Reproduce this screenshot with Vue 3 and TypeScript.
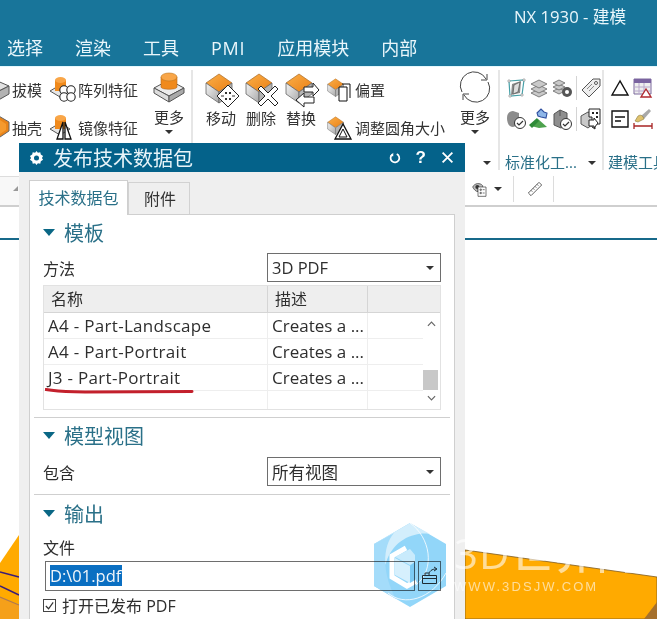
<script setup lang="ts">
const menus = ['选择', '渲染', '工具', 'PMI', '应用模块', '内部']
const templates = [
  { name: 'A4 - Part-Landscape', desc: 'Creates a ...' },
  { name: 'A4 - Part-Portrait', desc: 'Creates a ...' },
  { name: 'J3 - Part-Portrait', desc: 'Creates a ...' },
  { name: '', desc: '' }
]
</script>

<template>
  <div class="app">
    <svg class="defs" width="0" height="0">
      <defs>
        <linearGradient id="orange" x1="0" y1="0" x2="1" y2="1">
          <stop offset="0" stop-color="#fbb04a" />
          <stop offset="1" stop-color="#ea7f14" />
        </linearGradient>
        <linearGradient id="side" x1="0" y1="0" x2="1" y2="1">
          <stop offset="0" stop-color="#f4f4f4" />
          <stop offset="1" stop-color="#a8a8a8" />
        </linearGradient>
        <symbol id="cube" viewBox="0 0 36 36">
          <path d="M1 12 14 3l13 9-13 9z" fill="url(#orange)" stroke="#a96a25" stroke-width=".7" />
          <path d="M1 12v11l13 9V21z" fill="url(#side)" stroke="#666" stroke-width=".8" />
          <path d="M27 12v11l-13 9V21z" fill="#b5b5b5" stroke="#666" stroke-width=".8" />
        </symbol>
        <symbol id="plate" viewBox="0 0 32 32">
          <path d="M1 17 16 9l15 8-15 8z" fill="#ececec" stroke="#555" />
          <path d="M1 17v5l15 9v-6z" fill="#ddd" stroke="#555" />
          <path d="M31 17v5l-15 9v-6z" fill="#aaa" stroke="#555" />
          <path d="M8 6v10c0 3 16 3 16 0V6z" fill="#f08a1c" stroke="#b56a1c" stroke-width=".6" />
          <ellipse cx="16" cy="6" rx="8" ry="4" fill="#f9a648" stroke="#c0771f" stroke-width=".6" />
        </symbol>
      </defs>
    </svg>

    <header class="topbar">
      <div class="app-title">NX 1930 - 建模</div>
      <nav class="menu">
        <span v-for="m in menus" :key="m">{{ m }}</span>
      </nav>
    </header>

    <section class="ribbon">
      <div class="group group-a">
        <div class="group-body">
          <div class="stack">
            <div class="feature">
              <svg class="ic w21" viewBox="0 0 21 26"><path d="M-8 10 6 4l14 6-14 7z" fill="#e2e2e2" stroke="#555" /><path d="M20 10v8L6 26v-9z" fill="#b3b3b3" stroke="#555" /></svg>
              <span>拔模</span>
            </div>
            <div class="feature">
              <svg class="ic w21" viewBox="0 0 21 26"><path d="M-6 6 8 1l12 7v9L8 25-6 20z" fill="#e98419" stroke="#666" /><path d="M-3 8 8 4l9 6v6L8 22-3 17z" fill="#f59a2e" /></svg>
              <span>抽壳</span>
            </div>
          </div>
          <div class="stack">
            <div class="feature">
              <svg class="ic" viewBox="0 0 26 26">
                <path d="M0 15 10 9l10 6-10 6z" fill="#e6e6e6" stroke="#555" />
                <path d="M5 4v11h11V4z" fill="#f08a1c" />
                <ellipse cx="10.500" cy="4" rx="5.500" ry="3" fill="#f9a648" />
                <g fill="#fff" stroke="#222" stroke-width="1.100">
                  <circle cx="14" cy="14" r="4.200" /><circle cx="21" cy="14" r="4.200" /><circle cx="14" cy="21" r="4.200" /><circle cx="21" cy="21" r="4.200" />
                </g>
              </svg>
              <span>阵列特征</span>
            </div>
            <div class="feature">
              <svg class="ic" viewBox="0 0 26 26">
                <path d="M0 15 10 9l10 6-10 6z" fill="#e6e6e6" stroke="#555" />
                <path d="M5 4v11h11V4z" fill="#f08a1c" />
                <ellipse cx="10.500" cy="4" rx="5.500" ry="3" fill="#f9a648" />
                <path d="M13 8 7 25h6zM15 8l6 17h-6z" fill="#fff" stroke="#111" stroke-width="1.300" />
              </svg>
              <span>镜像特征</span>
            </div>
          </div>
          <div class="big more">
            <svg class="big-ic" viewBox="0 0 32 32"><use href="#plate" /></svg>
            <span>更多</span>
            <i class="caret"></i>
          </div>
        </div>
      </div>

      <div class="group group-b">
        <div class="group-body">
          <div class="big">
            <svg class="big-ic" viewBox="0 0 37 37">
              <use href="#cube" x="2" width="36" height="36" />
              <path d="M25 14 36 25 25 36 14 25z" fill="#fff" stroke="#222" />
              <path d="M22 21h2v2h-2zM26 21h2v2h-2zM22 27h2v2h-2zM26 27h2v2h-2zM18 24.500h3v1h-3zM29 24.500h3v1h-3z" fill="#333" />
            </svg>
            <span>移动</span>
          </div>
          <div class="big">
            <svg class="big-ic" viewBox="0 0 37 37">
              <use href="#cube" x="2" width="36" height="36" />
              <path d="m15 18 3-3 7 7 7-7 3 3-7 7 7 7-3 3-7-7-7 7-3-3 7-7z" fill="#fff" stroke="#222" />
            </svg>
            <span>删除</span>
          </div>
          <div class="big">
            <svg class="big-ic" viewBox="0 0 37 37">
              <use href="#cube" x="2" width="36" height="36" />
              <path d="M21 16h9v-4l6 7-6 6v-4h-9zM21 36l-8-7 8-7v4h10v6H21z" fill="#fff" stroke="#222" />
            </svg>
            <span>替换</span>
          </div>
          <div class="stack stack-b">
            <div class="feature">
              <svg class="ic" viewBox="0 0 26 26">
                <use href="#cube" width="22" height="22" y="1" />
                <path d="M12 11h8v14h-8z" fill="#fff" stroke="#111" />
                <path d="M15 8h8v14" fill="none" stroke="#111" />
              </svg>
              <span>偏置</span>
            </div>
            <div class="feature">
              <svg class="ic" viewBox="0 0 26 26">
                <use href="#cube" width="22" height="22" y="1" />
                <path d="M16 10 8 25h16z" fill="#fff" stroke="#111" stroke-width="1.300" />
                <path d="M16 15 12 23h8z" fill="none" stroke="#111" />
              </svg>
              <span>调整圆角大小</span>
            </div>
          </div>
          <div class="big more more-b">
            <svg class="big-ic" viewBox="0 0 32 32" fill="none" stroke="#444" stroke-width="1">
              <path d="M3 21A13 13 0 0 1 27 8" /><path d="M28 3v6h-6" />
              <path d="M29 11A13 13 0 0 1 5 24" /><path d="M4 29v-6h6" />
            </svg>
            <span>更多</span>
            <i class="caret"></i>
          </div>
        </div>
        <div class="group-foot foot-b"><i class="caret"></i></div>
      </div>

      <div class="group group-c">
        <div class="group-body">
          <div class="tool-grid">
            <svg viewBox="0 0 22 22"><path d="M7 7 16 4 15 16 6 18z" fill="#8a8a8a" /><path d="M4 4 19 3 17 18 5 19z" fill="none" stroke="#46a0a8" stroke-width="1.200" /><path d="M9 8 15 5 13 15 8 17z" fill="#ddd" stroke="#555" stroke-width=".7" /><path d="M3 3h2v2H3zM18 2h2v2h-2zM4 18h2v2H4zM16 17h2v2h-2z" fill="#fff" stroke="#888" stroke-width=".6" /></svg>
            <svg viewBox="0 0 22 22" fill="#c9c9c9" stroke="#666" stroke-width=".8"><path d="M11 12 3 16l8 4 8-4z" /><path d="M11 8 3 12l8 4 8-4z" /><path d="M11 3 3 7l8 4 8-4z" /></svg>
            <svg viewBox="0 0 22 22"><g fill="#c9c9c9" stroke="#666" stroke-width=".8"><path d="M8 11 2 14l6 3 6-3z" /><path d="M8 7 2 10l6 3 6-3z" /><path d="M8 3 2 6l6 3 6-3z" /></g><circle cx="16" cy="15" r="5" fill="#555" /><circle cx="16" cy="15" r="2" fill="#fff" /></svg>
            <b class="tool-div"></b>
            <svg viewBox="0 0 22 22"><path d="M13 2h7v7L9 20l-7-7z" fill="#eee" stroke="#555" /><circle cx="16" cy="6" r="1.500" fill="#fff" stroke="#555" /><path d="M7 12l5-5M9 14l5-5" stroke="#888" /></svg>
            <svg viewBox="0 0 22 22"><path d="M2 10c0-5 3-7 6-7l6 2v12l-6 2c-4 0-6-4-6-9z" fill="#8c8c8c" /><circle cx="15" cy="15" r="5.500" fill="#fff" stroke="#333" /><path d="m12 15 2 2 4-4" fill="none" stroke="#333" stroke-width="1.200" /></svg>
            <svg viewBox="0 0 22 22"><path d="M3 18 10 11l9 8-8 1z" fill="#4da24d" /><path d="M1 17 9 10l2 3-7 7z" fill="#2e8a38" /><path d="M9 5 13 1l3 3 3 1-1 5-5-1-3-1z" fill="#8eb6e8" stroke="#3050a0" stroke-width="1.100" /></svg>
            <svg viewBox="0 0 22 22"><path d="M3 6 9 2l7 3v12l-6 3-7-3z" fill="#8f8f8f" stroke="#555" /><path d="M9 8V2" stroke="#555" /><circle cx="15" cy="16" r="5.500" fill="#fff" stroke="#333" /><path d="m12 16 2 2 4-4" fill="none" stroke="#333" stroke-width="1.200" /></svg>
            <b class="tool-div"></b>
            <svg viewBox="0 0 22 22"><path d="M1 8 8 4l5 2v10l-5 4-7-4z" fill="#c9c9c9" stroke="#555" /><path d="M9 1h11v15h-5v5l-3-2V9H9z" fill="#fff" stroke="#222" /><path d="M12 4h2v2h-2zM16 4h2v2h-2zM16 8h2v2h-2z" fill="#222" /><path d="M9 12h5v-2l4 5-4 5v-2H9z" fill="#fff" stroke="#222" /></svg>
          </div>
        </div>
        <div class="group-foot foot-c"><span>标准化工...</span><i class="caret"></i></div>
      </div>

      <div class="group group-d">
        <div class="group-body">
          <div class="tool-grid tool-grid-d">
            <svg viewBox="0 0 22 22"><path d="M11 4 3 18h16z" fill="none" stroke="#111" stroke-width="1.400" /></svg>
            <svg viewBox="0 0 22 22"><path d="M2 2h17v15H2z" fill="#eee" stroke="#7d6a9d" /><path d="M2 2h17v4H2z" fill="#7a63a0" /><path d="M2 10h17M2 14h17M7 6v11M12 6v11" stroke="#b8a8cc" /><path d="M14 12 9 20h10z" fill="#fff" stroke="#b02a30" stroke-width="1.400" /></svg>
            <svg viewBox="0 0 22 22"><path d="M3 3h16v16H3z" fill="#fff" stroke="#111" stroke-width="1.400" /><path d="M6 9h10M6 13h6" stroke="#111" stroke-width="1.300" /></svg>
            <svg viewBox="0 0 22 22"><path d="M17 1 9 8l3 3 7-8z" fill="#a9a9a9" /><path d="M6 8c3-2 5 0 6 3l-6 3-3-1z" fill="#dfc26e" stroke="#8b7a3a" stroke-width=".6" /><path d="M2 15v6M20 15v6M2 18h18" stroke="#a82424" stroke-width="1.300" /></svg>
          </div>
          <b class="tail-div"></b>
        </div>
        <div class="group-foot foot-d"><span>建模工具</span></div>
      </div>
    </section>

    <div class="viewbar">
      <div class="view-left"><i class="mini-arrow"></i></div>
      <div class="view-right">
        <svg class="view-ic" viewBox="0 0 24 24">
          <path d="M1 9c3-6 11-7 15-2v5H9v4C6 16 3 13 1 9z" fill="#bbb" stroke="#333" />
          <circle cx="8" cy="9" r="3" fill="#333" />
          <path d="M9 9h12v14H9z" fill="#fff" stroke="#333" />
          <path d="M12 12h2v2h-2zM12 17h2v2h-2zM16 13h3M16 18h3" stroke="#333" fill="none" />
        </svg>
        <i class="caret view-caret"></i>
        <b class="view-div"></b>
        <svg class="view-ic ruler" viewBox="0 0 24 24"><path d="M2 18 18 2l4 4L6 22z" fill="#fff" stroke="#555" stroke-width="1.400" /><path d="m6 14 2 2M9 11l2 2M12 8l2 2M15 5l2 2" stroke="#555" stroke-width="1.400" /></svg>
        <b class="view-div"></b>
      </div>
    </div>

    <main class="graphics">
      <div class="graphics-bar"></div>
      <svg class="model" width="657" height="412" viewBox="0 207 657 412">
        <path d="M465 550 657 577V619H465z" fill="#ffaa00" stroke="#7c5a22" stroke-width=".8" />
        <path d="M657 602 644 619H657z" fill="#a5702c" />
        <path d="M0 563 19 535V619H0z" fill="#ffaa00" />
        <path d="M0 597 19 605V619H0z" fill="#f5a01a" />
        <path d="M0 572 19 577M0 586 19 595" stroke="#3b1c78" stroke-width="1.400" />
        <path d="M0 597 19 605" stroke="#b07a50" stroke-width="1.200" />
      </svg>
    </main>

    <section class="dialog">
      <div class="dialog-title">
        <svg class="gear" viewBox="0 0 16 16"><path d="M8 1l1.500 2 2.500-.6.600 2.500L15 6.500 13.800 8.500 15 10.500l-2.400 1.600-.6 2.500-2.500-.6L8 16l-1.500-2-2.500.6-.6-2.500L1 10.500 2.200 8.500 1 6.500l2.400-1.600.6-2.500 2.500.6z" fill="#fff" /><circle cx="8" cy="8.500" r="2.700" fill="#04628a" /></svg>
        <span class="dialog-name">发布技术数据包</span>
        <svg class="tbtn" viewBox="0 0 16 16" fill="none" stroke="#fff" stroke-width="2"><path d="M10 3.500a5 5 0 1 1-5 .5" /><path d="M5 1v4H1z" fill="#fff" stroke="none" transform="translate(1 1)" /></svg>
        <span class="tq">?</span>
        <svg class="tbtn tx" viewBox="0 0 16 16" stroke="#fff" stroke-width="2.200"><path d="m2 2 12 12M14 2 2 14" /></svg>
      </div>
      <div class="dialog-body">
        <div class="tabs">
          <div class="tab active">技术数据包</div>
          <div class="tab">附件</div>
        </div>
        <div class="panel">
          <div class="section sec-template">
            <div class="sec-head"><i class="tri"></i>模板</div>
            <div class="field">
              <label>方法</label>
              <div class="select">3D PDF<i class="caret"></i></div>
            </div>
            <div class="table">
              <div class="thead">
                <span>名称</span><span>描述</span><span></span>
              </div>
              <div class="tbody">
                <div class="rows">
                  <div v-for="(t, i) in templates" :key="i" class="row">
                    <span class="cell-name">{{ t.name }}</span><span>{{ t.desc }}</span><span></span>
                  </div>
                </div>
                <div class="scroll">
                  <svg viewBox="0 0 10 6" class="chev"><path d="m1 5 4-4 4 4" fill="none" stroke="#666" stroke-width="1.300" /></svg>
                  <div class="thumb"></div>
                  <svg viewBox="0 0 10 6" class="chev"><path d="m1 1 4 4 4-4" fill="none" stroke="#666" stroke-width="1.300" /></svg>
                </div>
              </div>
              <svg class="redline" viewBox="0 0 150 6" width="150" height="6"><path d="M1 1.500C14 4 24 3.500 40 4L147 3.500" fill="none" stroke="#c3202c" stroke-width="3" stroke-linecap="round" /></svg>
            </div>
          </div>
          <div class="section sec-view">
            <div class="sec-head"><i class="tri"></i>模型视图</div>
            <div class="field">
              <label>包含</label>
              <div class="select">所有视图<i class="caret"></i></div>
            </div>
          </div>
          <div class="section sec-output">
            <div class="sec-head"><i class="tri"></i>输出</div>
            <div class="file-label">文件</div>
            <div class="file-row">
              <div class="file-input"><span class="selected">D:\01.pdf</span></div>
              <div class="browse">
                <svg viewBox="0 0 20 20" width="20" height="20" fill="none" stroke="#333"><path d="M2.500 9.500h14v8h-14zM2.500 12.500h14M5 9V7h4" /><path d="M9 9c0-4 3-6 7-6M14 1l3 2-3 2" /></svg>
              </div>
            </div>
            <div class="check-row">
              <span class="check"><svg viewBox="0 0 12 12" width="12" height="12"><path d="m2 6 3 3 5-7" fill="none" stroke="#333" stroke-width="1.300" /></svg></span>
              打开已发布 PDF
            </div>
          </div>
        </div>
      </div>
    </section>

    <div class="watermark">
      <svg class="wm-hex" viewBox="0 0 72 84" width="72" height="84">
        <path d="M36 0 72 21V63L36 84 0 63V21z" fill="#92d6f9" />
        <path d="M36 0 56 11C44 9 20 14 12 40L0 62V21z" fill="#d3eefc" />
        <path d="M0 21 20 10C8 24 8 50 22 76L0 63z" fill="#a4dcfa" />
        <path d="M36 0C56 14 62 46 42 62M72 50C58 76 30 84 14 70" fill="none" stroke="#fff" stroke-width=".8" />
        <path d="M32 25 18 33V54L33 63 42 58" fill="none" stroke="#fff" stroke-width="5" />
        <path d="M36 26 21 34 36 42 41 39V32z" fill="#c9ebfc" />
        <path d="M21 35 36 43V60L21 52z" fill="#d6f0fd" />
        <path d="M41 39 36 43V60L41 57z" fill="#7ccbf5" />
      </svg>
      <div class="wm-text">
        <div class="wm-big">3D世界网</div>
        <div class="wm-url">WWW.3DSJW.COM</div>
      </div>
    </div>
  </div>
</template>

<style>
html, body { margin: 0; overflow: hidden; background: #fff; }
</style>

<style scoped>
.app {
  position: relative;
  width: 657px;
  height: 619px;
  overflow: hidden;
  background: #fff;
  color: #2e2e2e;
  font-family: "Open Sans", "Noto Sans CJK SC", sans-serif;
}
.defs { position: absolute; }

/* top */
.topbar {
  height: 66px;
  background: #18759a;
  color: #e9f6fb;
  box-sizing: border-box;
  padding-top: 6px;
}
.app-title {
  font-size: 16.700px;
  line-height: 22px;
  padding-left: 514px;
  white-space: nowrap;
}
.menu {
  display: flex;
  gap: 32px;
  padding: 7px 0 0 7px;
  font-size: 18px;
  line-height: 26px;
}
.menu span:nth-child(4) { letter-spacing: 0.7px; }

/* ribbon */
.ribbon {
  display: flex;
  height: 106px;
  box-sizing: border-box;
  padding-top: 3px;
  background: #fff;
  border-top: 1px solid #e4f8fd;
  font-size: 15px;
  color: #333;
}
.group {
  flex: none;
  box-sizing: border-box;
  height: 100px;
  display: flex;
  flex-direction: column;
  border-right: 2px solid #e6e6e6;
}
.group-a { width: 204px; margin-left: -11px; }
.group-b { width: 307px; padding-left: 8px; }
.group-c { width: 104px; padding-left: 4px; }
.group-d { flex: 1; border-right: 0; padding-left: 4px; }
.group-body { flex: 1; display: flex; min-height: 0; }
.group-foot {
  height: 19px;
  margin-bottom: -2px;
  display: flex;
  align-items: center;
  color: #2a7088;
  font-size: 15px;
  line-height: 19px;
  white-space: nowrap;
}
.foot-b { justify-content: flex-end; padding-right: 7px; }
.foot-c { gap: 11px; padding-left: 1px; }
.stack { display: flex; flex-direction: column; margin-right: 8px; }
.stack-b { margin-left: 6px; margin-right: 0; }
.feature {
  height: 38px;
  display: flex;
  align-items: center;
  gap: 2px;
  white-space: nowrap;
}
.ic { width: 26px; height: 26px; flex: none; }
.w21 { width: 21px; }
.big {
  width: 40px;
  display: flex;
  flex-direction: column;
  align-items: center;
  line-height: 20px;
  padding-top: 1px;
}
.big-ic { width: 37px; height: 37px; }
.more { margin-left: 3px; }
.more .big-ic { width: 32px; height: 32px; margin-bottom: 4px; }
.more .caret { margin-top: 3px; }
.more-b { margin-left: auto; margin-right: 3px; }
.caret {
  display: block;
  width: 0;
  height: 0;
  flex: none;
  border-left: 4px solid transparent;
  border-right: 4px solid transparent;
  border-top: 4px solid #333;
}
.tool-grid {
  display: grid;
  grid-template-columns: 23px 23px 23px 6px 23px;
  grid-auto-rows: 22px;
  row-gap: 9px;
  padding-top: 7px;
  justify-items: center;
  align-items: center;
}
.tool-grid svg { width: 22px; height: 22px; }
.tool-grid-d { grid-template-columns: 23px 23px; }
.tool-div { width: 1px; height: 24px; background: #d4d4d4; }
.tail-div { width: 1px; height: 22px; margin: 38px 0 0 3px; background: #d4d4d4; }

/* graphics toolbar */
.viewbar {
  height: 35px;
  display: flex;
  justify-content: space-between;
  box-sizing: border-box;
  border-bottom: 2px solid #cfcfcf;
}
.view-left {
  width: 19px;
  margin-top: 4px;
  border-top: 1px solid #ddd;
  background: #f8f8f8;
  position: relative;
}
.mini-arrow {
  position: absolute;
  right: 1px;
  top: 9px;
  border-left: 5px solid transparent;
  border-right: 0;
  border-bottom: 5px solid #999;
}
.view-right {
  width: 192px;
  display: flex;
  align-items: center;
  padding-left: 7px;
  box-sizing: border-box;
}
.view-ic { width: 16px; height: 16px; flex: none; }
.view-caret { margin: 0 11px 0 6px; }
.view-div { width: 1px; height: 26px; background: #dcdcdc; }
.ruler { margin: 0 10px 0 13px; }

.graphics { position: relative; height: 412px; }
.graphics-bar { padding-top: 31px; }
.graphics-bar::after { content: ""; display: block; height: 2px; background: #17698a; }
.model { position: absolute; left: 0; top: 0; }

/* dialog */
.dialog {
  position: absolute;
  left: 19px;
  top: 143px;
  width: 446px;
  height: 476px;
  display: flex;
  flex-direction: column;
  background: #efefef;
}
.dialog-title {
  height: 29px;
  flex: none;
  display: flex;
  align-items: center;
  background: #04628a;
  color: #e8f4f9;
  padding: 0 10px;
  box-sizing: border-box;
}
.gear { width: 15px; height: 15px; flex: none; }
.dialog-name { font-size: 20px; margin-left: 9px; }
.tbtn { width: 14px; height: 14px; margin-left: auto; margin-right: 1px; }
.tq { font-size: 17px; font-weight: 700; margin-left: 13px; color: #fff; font-family: "Liberation Sans", sans-serif; }
.tx { margin-left: 15px; margin-right: 1px; width: 13px; height: 13px; flex: none; }
.dialog-body {
  flex: 1;
  min-height: 0;
  display: flex;
  flex-direction: column;
  padding: 8px 10px 0;
}
.tabs { display: flex; height: 34px; flex: none; position: relative; z-index: 1; }
.tab {
  width: 62px;
  box-sizing: border-box;
  height: 32px;
  margin-top: 2px;
  border: 1px solid #d2d2d2;
  border-bottom: 0;
  text-align: center;
  font-size: 16px;
  line-height: 32px;
  color: #333;
}
.tab.active {
  width: 99px;
  margin-top: 0;
  height: 35px;
  background: #fff;
  color: #2a7088;
  line-height: 34px;
  border-color: #cfcfcf;
}
.tab:not(.active) { padding-left: 2px; }
.panel {
  flex: 1;
  background: #fff;
  border: 1px solid #cfcfcf;
  border-bottom: 0;
  padding: 0 4px;
}
.section { padding: 0 9px; border-bottom: 1px solid #cfcfcf; box-sizing: border-box; }
.sec-template { height: 203px; }
.sec-view { height: 77px; }
.sec-output { border-bottom: 0; }
.sec-head {
  display: flex;
  align-items: center;
  height: 26px;
  padding-top: 4px;
  font-size: 20px;
  color: #2a7088;
  margin-bottom: 8px;
}
.sec-view .sec-head { padding-top: 4px; margin-bottom: 9px; }
.sec-output .sec-head { padding-top: 5px; margin-bottom: 0; }
.tri {
  width: 0;
  height: 0;
  margin-right: 9px;
  border-left: 6px solid transparent;
  border-right: 6px solid transparent;
  border-top: 7px solid #0a6785;
}
.field {
  display: flex;
  align-items: center;
  justify-content: space-between;
  height: 29px;
  font-size: 16px;
}
.select {
  width: 174px;
  height: 29px;
  box-sizing: border-box;
  border: 1px solid #6e6e6e;
  padding-left: 4px;
  display: flex;
  align-items: center;
  justify-content: space-between;
  font-size: 16.500px;
}
.select .caret { margin-right: 6px; }
.table {
  position: relative;
  margin-top: 3px;
  border: 1px solid #e2e2e2;
  font-size: 17px;
}
.thead {
  display: grid;
  grid-template-columns: 224px 100px 1fr;
  height: 26px;
  background: #eee;
  border-bottom: 1px solid #d5d5d5;
  line-height: 26px;
  font-size: 16px;
}
.thead span { padding-left: 7px; border-right: 1px solid #d5d5d5; }
.thead span:last-child { border-right: 0; }
.tbody { display: flex; height: 96px; }
.rows { flex: 1; }
.row {
  display: grid;
  grid-template-columns: 224px 100px 1fr;
  height: 26px;
  box-sizing: border-box;
  border-bottom: 1px solid #eee;
  line-height: 25px;
  white-space: nowrap;
}
.row:last-child { border-bottom: 0; height: 18px; }
.row span { padding-left: 4px; border-right: 1px solid #eee; }
.row span:last-child { border-right: 0; }
.cell-name { letter-spacing: 0.3px; }
.scroll {
  flex: none;
  width: 17px;
  display: flex;
  flex-direction: column;
  align-items: center;
  position: relative;
  padding: 8px 0;
  box-sizing: border-box;
  justify-content: space-between;
}
.chev { width: 9px; height: 6px; }
.thumb {
  position: absolute;
  left: 0;
  right: 2px;
  top: 57px;
  height: 20px;
  background: #c8c8c8;
}
.redline { position: absolute; left: 1px; top: 102px; }
.file-label { font-size: 16px; line-height: 20px; margin-top: 12px; }
.file-row { display: flex; gap: 3px; margin: 3px 0 0 2px; height: 30px; }
.file-input {
  flex: 1;
  border: 1px solid #6e6e6e;
  padding: 3px 0 0 4px;
  box-sizing: border-box;
  font-size: 16.500px;
  line-height: 21px;
}
.selected { display: inline-block; background: #0a6fc2; color: #f2f6fa; padding-right: 1px; }
.browse {
  width: 23px;
  box-sizing: border-box;
  border: 1px solid #6e6e6e;
  display: flex;
  align-items: center;
  justify-content: center;
}
.check-row {
  display: flex;
  align-items: center;
  gap: 6px;
  height: 20px;
  margin-top: 4px;
  font-size: 16px;
}
.check {
  width: 13px;
  height: 13px;
  box-sizing: border-box;
  border: 1px solid #444;
  display: flex;
}

/* watermark */
.watermark { position: absolute; left: 374px; top: 523px; pointer-events: none; }
.wm-hex { display: block; mix-blend-mode: multiply; }
.wm-text {
  position: absolute;
  left: 80px;
  top: 10px;
  color: rgba(255, 255, 255, 0.6);
  white-space: nowrap;
}
.wm-big { font-size: 42px; line-height: 40px; font-weight: 500; letter-spacing: 1px; }
.wm-url { font-size: 13px; line-height: 16px; letter-spacing: 2.100px; font-family: "Liberation Sans", sans-serif; margin-top: 6px; }
</style>
